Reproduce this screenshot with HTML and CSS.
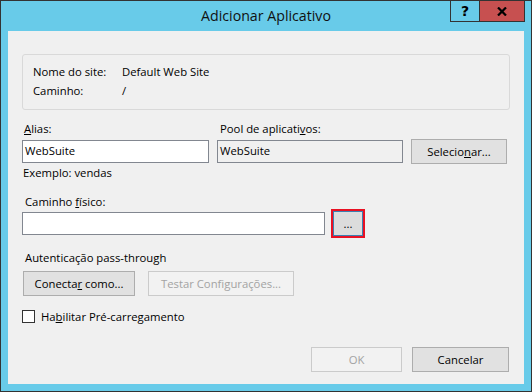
FILE: index.html
```html
<!DOCTYPE html>
<html lang="pt">
<head>
  <meta charset="UTF-8">
  <title>Adicionar Aplicativo</title>
  <link rel="stylesheet" href="styles.css">
</head>
<body>

  <div class="window">
    <div class="titlebar">
      <span class="title">Adicionar Aplicativo</span>
      <div class="caption-buttons">
        <span class="cap-btn help">?</span>
        <span class="cap-btn close">
          <svg width="10" height="9" viewBox="0 0 10 9">
            <path d="M1 0.5 L9 8.5 M9 0.5 L1 8.5" stroke="#000" stroke-width="2.2" fill="none"/>
          </svg>
        </span>
      </div>
    </div>

    <div class="client">
      <div class="site-info">
        <div class="info-row"><span class="info-key">Nome do site:</span><span>Default Web Site</span></div>
        <div class="info-row"><span class="info-key">Caminho:</span><span>/</span></div>
      </div>

      <div class="alias-grid">
        <label class="lbl"><u>A</u>lias:</label>
        <label class="lbl">Pool de aplicati<u>v</u>os:</label>
        <span></span>
        <div class="textbox">WebSuite</div>
        <div class="textbox readonly">WebSuite</div>
        <button class="btn">Selecio<u>n</u>ar...</button>
      </div>

      <div class="hint">Exemplo: vendas</div>

      <label class="lbl path-lbl">Caminho <u>f</u>ísico:</label>
      <div class="path-row">
        <div class="textbox path-box"></div>
        <button class="btn browse">...</button>
      </div>

      <div class="lbl auth-lbl">Autenticação pass-through</div>
      <div class="auth-row">
        <button class="btn connect">Conecta<u>r</u> como...</button>
        <button class="btn test" disabled>Testar Configurações...</button>
      </div>

      <div class="check-row">
        <span class="checkbox"></span>
        <span>Ha<u>b</u>ilitar Pré-carregamento</span>
      </div>

      <div class="footer">
        <button class="btn ok" disabled>OK</button>
        <button class="btn cancel">Cancelar</button>
      </div>
    </div>
  </div>

</body>
</html>
```

FILE: styles.css
```css
* { box-sizing: border-box; margin: 0; padding: 0; }
body {
  background: #68cbe9;
  font-family: "Open Sans", "Noto Sans", sans-serif;
  font-size: 11.3px;
  color: #000;
}
u { text-decoration: underline; text-underline-offset: 1px; }

.window {
  position: relative;
  width: 532px;
  height: 392px;
  background: #68cbe9;
  border: 1px solid #333;
}
.titlebar {
  height: 30px;
  text-align: center;
}
.title {
  display: block;
  font-size: 14.2px;
  line-height: 26px;
  padding-top: 2px;
  color: #111;
}
.caption-buttons {
  position: absolute;
  top: -1px;
  right: 6px;
  display: flex;
}
.cap-btn {
  height: 22px;
  display: flex;
  align-items: center;
  justify-content: center;
  border: 1px solid #333;
  font-weight: bold;
  font-size: 14px;
  font-family: "DejaVu Sans", sans-serif;
}
.help { width: 29px; border-right: none; }
.close { width: 46px; background: #c75050; }

.client {
  height: 353px;
  margin: 0 7px;
  background: #f0f0f0;
  padding: 23px 15px 0 14px;
}

.site-info {
  height: 56px;
  width: 488px;
  border: 1px solid #d9d9d9;
  border-radius: 3px;
  padding: 7px 10px 0;
}
.info-row { display: flex; line-height: 19px; }
.info-key { width: 89px; }

.lbl { display: block; line-height: 15px; }
.alias-grid {
  display: grid;
  grid-template-columns: 187px 186px 96px;
  column-gap: 8px;
  row-gap: 3px;
  align-items: center;
  margin-top: 11px;
}
.alias-grid .lbl { padding-left: 2px; }
.alias-grid .lbl:nth-child(2) { padding-left: 3px; }

.textbox {
  height: 23px;
  border: 1px solid #828790;
  background: #fff;
  padding: 0 2px;
  line-height: 20px;
}
.textbox.readonly { background: #f0f0f0; }

.btn {
  height: 25px;
  border: 1px solid #adadad;
  background: #e1e1e1;
  font: inherit;
  color: #000;
}
.btn:disabled {
  border-color: #cbcbcb;
  background: #f2f2f2;
  color: #a3a3a3;
}

.hint { line-height: 15px; margin-top: 1px; padding-left: 1px; }

.path-lbl { margin-top: 14px; padding-left: 3px; }
.path-row {
  display: flex;
  align-items: center;
  gap: 8px;
  margin-top: 2px;
}
.path-box { width: 303px; }
.browse {
  width: 30px;
  border-color: #3c7fb1;
  background: #dcdcdc;
  outline: 2px solid #e81123;
  line-height: 22px;
}

.auth-lbl { margin-top: 14px; padding-left: 3px; }
.auth-row {
  display: flex;
  gap: 13px;
  margin-top: 6px;
  padding-left: 1px;
}
.connect { width: 112px; }
.test { width: 146px; }

.check-row {
  display: flex;
  align-items: center;
  gap: 6px;
  margin-top: 13px;
  line-height: 15px;
}
.checkbox {
  width: 13px;
  height: 13px;
  border: 1px solid #333;
  background: #fff;
}

.footer {
  display: flex;
  justify-content: flex-end;
  gap: 10px;
  margin-top: 23px;
}
.ok { width: 91px; }
.cancel { width: 97px; }
```
